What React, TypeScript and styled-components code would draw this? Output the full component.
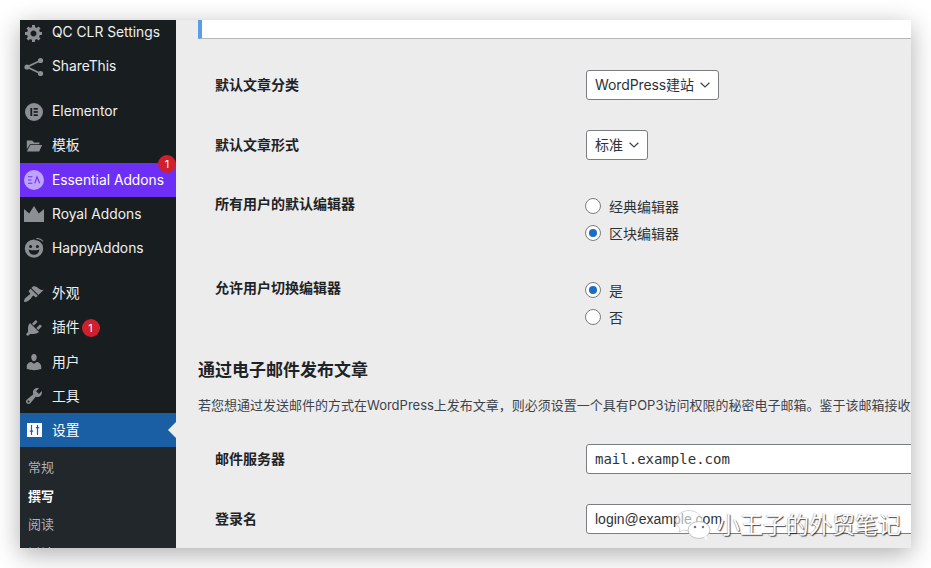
import React from "react";
import styled, { createGlobalStyle } from "styled-components";

const SANS = `Inter, "Noto Sans CJK SC", sans-serif`;
const ICON_GREY = "#8c8f94";

const GlobalStyle = createGlobalStyle`
  html, body {
    margin: 0;
    padding: 0;
    background: #fff;
    font-family: ${SANS};
  }
`;

const Dashicon = ({ d, size = 20 }: { d: string; size?: number }) => (
  <svg width={size} height={size} viewBox="0 0 20 20" fill={ICON_GREY}>
    <path d={d} />
  </svg>
);

const GEAR =
  "M18 12h-2.18c-.17.7-.44 1.35-.81 1.93l1.54 1.54-2.1 2.1-1.54-1.54c-.58.36-1.23.63-1.91.79V19H8v-2.18c-.68-.16-1.33-.43-1.91-.79l-1.54 1.54-2.12-2.12 1.54-1.54c-.36-.58-.63-1.23-.79-1.91H1V9.03h2.17c.16-.7.44-1.35.8-1.94L2.43 5.55l2.1-2.1 1.54 1.54c.58-.37 1.24-.64 1.93-.81V2h3v2.18c.68.16 1.33.43 1.91.79l1.54-1.54 2.12 2.12-1.54 1.54c.36.59.64 1.24.8 1.94H18V12zm-8.5 1.5c1.66 0 3-1.34 3-3s-1.34-3-3-3-3 1.34-3 3 1.34 3 3 3z";
const FOLDER = "M2 4h6l2 2h6v2H5.5L2 13.5zM5.8 9H19l-3.2 7H2z";
const CROWN = "M0 18V5l5.2 4.6L10 2l4.8 7.6L20 5v13z";
const BRUSH =
  "M14.48 11.06L7.41 3.99l1.5-1.5c.5-.56 2.3-.47 3.51.32 1.21.8 1.43 1.28 2.91 2.1 1.18.64 2.45 1.26 4.45.85zm-.71.71L6.7 4.7 4.93 6.47c-.39.39-.39 1.02 0 1.41l1.06 1.06c.39.39.39 1.03 0 1.42-.6.6-1.43 1.11-2.21 1.69-.35.26-.7.53-1.01.84C1.43 13.23 0 15.8 0 17c0 .55.45 1 1 1 1.2 0 3.77-1.43 5.2-2.84.31-.31.58-.66.84-1.01.58-.78 1.09-1.61 1.69-2.21.39-.39 1.03-.39 1.42 0l1.06 1.06c.39.39 1.02.39 1.41 0z";
const PLUG =
  "M13.11 4.36L9.87 7.6 8 5.73l3.24-3.24c.35-.34 1.05-.2 1.56.32.52.51.66 1.21.31 1.55zm-8 1.77l.91-1.12 9.01 9.01-1.19.84c-.71.71-2.63 1.16-3.82 1.16H6.14L4.9 17.26c-.59.59-1.54.59-2.12 0-.59-.58-.59-1.53 0-2.12l1.24-1.24v-3.88c0-1.13.4-3.19 1.09-3.89zm7.26 3.97l3.24-3.24c.34-.35 1.04-.21 1.55.31.52.51.66 1.21.31 1.55l-3.24 3.25z";
const USER =
  "M10 9.25c-2.27 0-2.73-3.44-2.73-3.44C7 4.02 7.82 2 9.97 2c2.16 0 2.98 2.02 2.71 3.81 0 0-.41 3.44-2.68 3.44zm0 2.57L12.72 10c2.39 0 4.52 2.33 4.52 4.53v2.49s-3.65 1.13-7.24 1.13c-3.65 0-7.24-1.13-7.24-1.13v-2.49c0-2.25 1.94-4.48 4.47-4.48z";
const WRENCH =
  "M16.68 9.77c-1.34 1.34-3.3 1.67-4.95.99l-5.41 6.52c-.99.99-2.59.99-3.58 0s-.99-2.59 0-3.57l6.52-5.42c-.68-1.65-.35-3.61.99-4.95 1.28-1.28 3.12-1.62 4.72-1.06l-2.89 2.89 2.82 2.82 2.86-2.87c.53 1.58.18 3.39-1.08 4.65zM3.81 16.21c.4.39 1.04.39 1.43 0 .4-.4.4-1.04 0-1.43-.39-.4-1.03-.4-1.43 0-.39.39-.39 1.03 0 1.43z";

const ShareIcon = () => (
  <svg width="20" height="20" viewBox="0 0 20 20" fill="none">
    <path d="M16.5 3.5 L3 10 L16.5 16.5" stroke={ICON_GREY} strokeWidth="1.8" />
    <circle cx="16.5" cy="3.5" r="2.6" fill={ICON_GREY} />
    <circle cx="3" cy="10" r="2.6" fill={ICON_GREY} />
    <circle cx="16.5" cy="16.5" r="2.6" fill={ICON_GREY} />
  </svg>
);

const ElementorIcon = () => (
  <svg width="18" height="18" viewBox="0 0 18 18">
    <circle cx="9" cy="9" r="9" fill={ICON_GREY} />
    <rect x="5.4" y="5" width="1.8" height="8" fill="#181d20" />
    <rect x="8.6" y="5" width="4.2" height="1.7" fill="#181d20" />
    <rect x="8.6" y="8.1" width="4.2" height="1.7" fill="#181d20" />
    <rect x="8.6" y="11.3" width="4.2" height="1.7" fill="#181d20" />
  </svg>
);

const EssentialIcon = () => (
  <svg width="20" height="20" viewBox="0 0 20 20">
    <circle cx="10" cy="10" r="10" fill="#bea4ff" />
    <path d="M4 6.8h4.4M4 10h3.4M4 13.2h4.4" stroke="#6d2ff5" strokeWidth="1.1" />
    <path d="M10.8 13.2 L13 6.8 L15.6 13.2" stroke="#6d2ff5" strokeWidth="1.1" fill="none" />
  </svg>
);

const HappyIcon = () => (
  <svg width="20" height="20" viewBox="0 0 20 20">
    <circle cx="10" cy="10.6" r="9.2" fill={ICON_GREY} />
    <path d="M11.5 1.6 Q16 1.2 18 5" stroke="#181d20" strokeWidth="1.6" fill="none" />
    <path d="M12.4 0.4 Q17 0.6 18.8 3.4" stroke={ICON_GREY} strokeWidth="1.1" fill="none" />
    <circle cx="6.6" cy="8.4" r="1.5" fill="#181d20" />
    <circle cx="13.4" cy="8.4" r="1.5" fill="#181d20" />
    <path d="M4.6 11.4 Q10 13.2 15.4 11.4 Q14.6 16.8 10 16.8 Q5.4 16.8 4.6 11.4Z" fill="#181d20" />
  </svg>
);

const SettingsIcon = () => (
  <svg width="15" height="14" viewBox="0 0 15 14">
    <rect width="15" height="14" fill="#fff" />
    <path d="M4.5 2v10M10.5 2v10" stroke="#1a5ea4" strokeWidth="1.2" />
    <path d="M2.8 7.4h3.4v1.3H2.8zM8.8 4h3.4v1.3H8.8z" fill="#1a5ea4" />
  </svg>
);

const ChevronIcon = () => (
  <svg width="10" height="6" viewBox="0 0 10 6" fill="none">
    <path d="M0.6 0.8 L5 5 L9.4 0.8" stroke="#3c434a" strokeWidth="1.2" />
  </svg>
);

const WechatIcon = () => (
  <svg width="36" height="32" viewBox="0 0 36 32" fill="none">
    <path
      d="M14 1.5C7 1.5 1 6 1 12c0 3 1.6 5.6 4 7.4L4 23l4.4-2c1.6.6 3.4.9 5.6.9 7 0 13-4.4 13-9.9S21 1.5 14 1.5z"
      stroke="#ccc"
      strokeWidth=".8"
      fill="rgba(255,255,255,.6)"
    />
    <ellipse cx="24" cy="21" rx="11" ry="8.4" fill="#fff" stroke="#aaa" strokeWidth=".7" />
    <path d="M29 28l3 3.4-.4-5z" fill="#fff" />
    <circle cx="20" cy="18" r="1.3" fill="#777" />
    <circle cx="28" cy="18" r="1.3" fill="#777" />
  </svg>
);

const App: React.FunctionComponent = () => {
  return (
    <>
      <GlobalStyle />
      <Stage>
        <Window>
          <Sidebar>
            <MenuGroup>
              <MenuItem>
                <IconSlot><Dashicon d={GEAR} /></IconSlot>
                <MenuLabel>QC CLR Settings</MenuLabel>
              </MenuItem>
              <MenuItem>
                <IconSlot><ShareIcon /></IconSlot>
                <MenuLabel>ShareThis</MenuLabel>
              </MenuItem>
            </MenuGroup>
            <MenuGroup $gap={11}>
              <MenuItem>
                <IconSlot><ElementorIcon /></IconSlot>
                <MenuLabel>Elementor</MenuLabel>
              </MenuItem>
              <MenuItem>
                <IconSlot><Dashicon d={FOLDER} size={18} /></IconSlot>
                <MenuLabel>模板</MenuLabel>
              </MenuItem>
              <MenuItem $background="#6d2ff5" $color="#fff">
                <IconSlot><EssentialIcon /></IconSlot>
                <MenuLabel $low>Essential Addons</MenuLabel>
                <CornerBadge>1</CornerBadge>
              </MenuItem>
              <MenuItem>
                <IconSlot><Dashicon d={CROWN} /></IconSlot>
                <MenuLabel $low>Royal Addons</MenuLabel>
              </MenuItem>
              <MenuItem>
                <IconSlot><HappyIcon /></IconSlot>
                <MenuLabel $low>HappyAddons</MenuLabel>
              </MenuItem>
            </MenuGroup>
            <MenuGroup $gap={12}>
              <MenuItem>
                <IconSlot><Dashicon d={BRUSH} /></IconSlot>
                <MenuLabel>外观</MenuLabel>
              </MenuItem>
              <MenuItem>
                <IconSlot><Dashicon d={PLUG} /></IconSlot>
                <MenuLabel>插件</MenuLabel>
                <InlineBadge>1</InlineBadge>
              </MenuItem>
              <MenuItem>
                <IconSlot><Dashicon d={USER} /></IconSlot>
                <MenuLabel $low>用户</MenuLabel>
              </MenuItem>
              <MenuItem>
                <IconSlot><Dashicon d={WRENCH} /></IconSlot>
                <MenuLabel $low>工具</MenuLabel>
              </MenuItem>
              <MenuItem $background="#1a5ea4" $color="#fff" $current>
                <IconSlot><SettingsIcon /></IconSlot>
                <MenuLabel $low>设置</MenuLabel>
              </MenuItem>
            </MenuGroup>
            <SubMenu>
              <SubItem>常规</SubItem>
              <SubItem $active>撰写</SubItem>
              <SubItem>阅读</SubItem>
              <SubItem>讨论</SubItem>
            </SubMenu>
          </Sidebar>
          <Main>
            <Notice />
            <FormRow $top={16}>
              <Label>默认文章分类</Label>
              <Select $width={133}>
                WordPress建站
                <ChevronSlot><ChevronIcon /></ChevronSlot>
              </Select>
            </FormRow>
            <FormRow>
              <Label>默认文章形式</Label>
              <Select $width={62}>
                标准
                <ChevronSlot><ChevronIcon /></ChevronSlot>
              </Select>
            </FormRow>
            <ChoiceRow $top={1}>
              <Label>所有用户的默认编辑器</Label>
              <RadioGroup>
                <RadioRow><Radio />经典编辑器</RadioRow>
                <RadioRow><Radio $checked />区块编辑器</RadioRow>
              </RadioGroup>
            </ChoiceRow>
            <ChoiceRow>
              <Label>允许用户切换编辑器</Label>
              <RadioGroup>
                <RadioRow><Radio $checked />是</RadioRow>
                <RadioRow><Radio />否</RadioRow>
              </RadioGroup>
            </ChoiceRow>
            <SectionTitle>通过电子邮件发布文章</SectionTitle>
            <Description>
              若您想通过发送邮件的方式在WordPress上发布文章，则必须设置一个具有POP3访问权限的秘密电子邮箱。鉴于该邮箱接收到的所有邮件都会被发布，请您务必保密。
            </Description>
            <FormRow $top={14}>
              <Label>邮件服务器</Label>
              <TextInput $mono>mail.example.com</TextInput>
            </FormRow>
            <FormRow>
              <Label>登录名</Label>
              <TextInput>login@example.com</TextInput>
            </FormRow>
          </Main>
          <Watermark>
            <WechatIcon />
            <WatermarkText>小王子的外贸笔记</WatermarkText>
          </Watermark>
        </Window>
      </Stage>
    </>
  );
};

export default App;

const Stage = styled.div`
  width: 931px;
  height: 568px;
  padding: 20px;
  box-sizing: border-box;
  overflow: hidden;
`;

const Window = styled.div`
  position: relative;
  display: flex;
  width: 891px;
  height: 528px;
  overflow: hidden;
  background: #ececec;
  box-shadow: 0 6px 24px rgba(0, 0, 0, 0.32);
`;

const Sidebar = styled.nav`
  flex: none;
  width: 156px;
  margin-top: -4px;
  background: #181d20;
  color: #f0f0f1;
  font-size: 13.8px;
`;

const MenuGroup = styled.div<{ $gap?: number }>`
  margin-top: ${(p) => p.$gap || 0}px;
`;

const MenuItem = styled.div<{ $background?: string; $color?: string; $current?: boolean }>`
  position: relative;
  display: flex;
  align-items: center;
  height: 34px;
  background: ${(p) => p.$background || "transparent"};
  color: ${(p) => p.$color || "#f0f0f1"};
  white-space: nowrap;

  ${(p) =>
    p.$current &&
    `&::after {
      content: "";
      position: absolute;
      right: 0;
      top: 9px;
      border: 8px solid transparent;
      border-right-color: #ececec;
    }`}
`;

const MenuLabel = styled.span<{ $low?: boolean }>`
  padding-bottom: ${(p) => (p.$low ? 0 : 2)}px;
  line-height: 20px;
`;

const IconSlot = styled.span`
  display: flex;
  flex: none;
  align-items: center;
  justify-content: center;
  width: 28px;
  margin-right: 4px;
`;

const CornerBadge = styled.span`
  position: absolute;
  top: -8px;
  right: 0;
  width: 18px;
  height: 18px;
  border-radius: 50%;
  background: #d0202e;
  color: #fff;
  font-size: 11px;
  line-height: 18px;
  text-align: center;
`;

const InlineBadge = styled.span`
  width: 18px;
  height: 18px;
  margin-left: 2px;
  border-radius: 50%;
  background: #d0202e;
  color: #fff;
  font-size: 11px;
  line-height: 18px;
  text-align: center;
`;

const SubMenu = styled.div`
  height: 120px;
  padding-top: 6px;
  box-sizing: border-box;
  background: #22272c;
`;

const SubItem = styled.div<{ $active?: boolean }>`
  height: 28.5px;
  padding-left: 8px;
  color: ${(p) => (p.$active ? "#fff" : "#b0b3b7")};
  font-size: 13px;
  font-weight: ${(p) => (p.$active ? 700 : 400)};
  line-height: 28.5px;
`;

const Main = styled.main`
  flex: 1;
  min-width: 0;
  padding-left: 22px;
  overflow: hidden;
  color: #1d2327;
`;

const Notice = styled.div`
  height: 19px;
  box-sizing: border-box;
  background: #fff;
  border-left: 4px solid #5a9de6;
  border-bottom: 1px solid #b5b6b8;
`;

const FormRow = styled.div<{ $top?: number }>`
  display: flex;
  align-items: center;
  height: 60px;
  margin-top: ${(p) => p.$top || 0}px;
`;

const Label = styled.div`
  flex: none;
  width: 371px;
  padding-left: 17px;
  font-size: 14px;
  font-weight: 600;
  line-height: 20px;
  color: #1d2327;
`;

const Select = styled.div<{ $width: number }>`
  position: relative;
  flex: none;
  width: ${(p) => p.$width}px;
  height: 30px;
  padding-left: 8px;
  box-sizing: border-box;
  border: 1px solid #7a7d82;
  border-radius: 3px;
  background: #fff;
  color: #2c3338;
  font-size: 14px;
  letter-spacing: -0.1px;
  line-height: 27px;
`;

const ChevronSlot = styled.span`
  position: absolute;
  right: 8px;
  top: 11px;
  display: flex;
`;

const ChoiceRow = styled.div<{ $top?: number }>`
  display: flex;
  height: 84px;
  margin-top: ${(p) => p.$top || 0}px;
  padding-top: 18px;
  box-sizing: border-box;
`;

const RadioGroup = styled.div`
  display: flex;
  flex-direction: column;
  gap: 7px;
  padding-top: 2px;
`;

const RadioRow = styled.label`
  display: flex;
  align-items: center;
  gap: 8px;
  height: 20px;
  margin-left: -1px;
  color: #2c3338;
  font-size: 14px;
`;

const Radio = styled.span<{ $checked?: boolean }>`
  display: flex;
  align-items: center;
  justify-content: center;
  width: 16px;
  height: 16px;
  box-sizing: border-box;
  border: 1px solid #7a7d82;
  border-radius: 50%;
  background: #fff;

  &::before {
    content: "";
    display: ${(p) => (p.$checked ? "block" : "none")};
    width: 8px;
    height: 8px;
    border-radius: 50%;
    background: #1a6dc2;
  }
`;

const SectionTitle = styled.h2`
  margin: 14px 0 0;
  font-size: 17px;
  font-weight: 600;
  line-height: 24px;
  color: #1d2327;
`;

const Description = styled.p`
  margin: 13px 0 0;
  width: 900px;
  font-size: 13px;
  line-height: 20px;
  white-space: nowrap;
  color: #3c434a;
`;

const TextInput = styled.div<{ $mono?: boolean }>`
  flex: none;
  width: 400px;
  height: 30px;
  padding-left: 8px;
  box-sizing: border-box;
  border: 1px solid #7a7d82;
  border-radius: 3px;
  background: #fff;
  color: #2c3338;
  font-family: ${(p) => (p.$mono ? `"DejaVu Sans Mono", monospace` : `"Liberation Sans", sans-serif`)};
  font-size: 14px;
  line-height: 28px;
`;

const Watermark = styled.div`
  position: absolute;
  left: 655px;
  top: 489px;
  display: flex;
  align-items: center;
  gap: 6px;
`;

const WatermarkText = styled.span`
  color: #fff;
  font-size: 23px;
  line-height: 32px;
  white-space: nowrap;
  text-shadow: 1px 1px 1px rgba(0, 0, 0, 0.7), -0.5px -0.5px 1px rgba(0, 0, 0, 0.35);
`;
